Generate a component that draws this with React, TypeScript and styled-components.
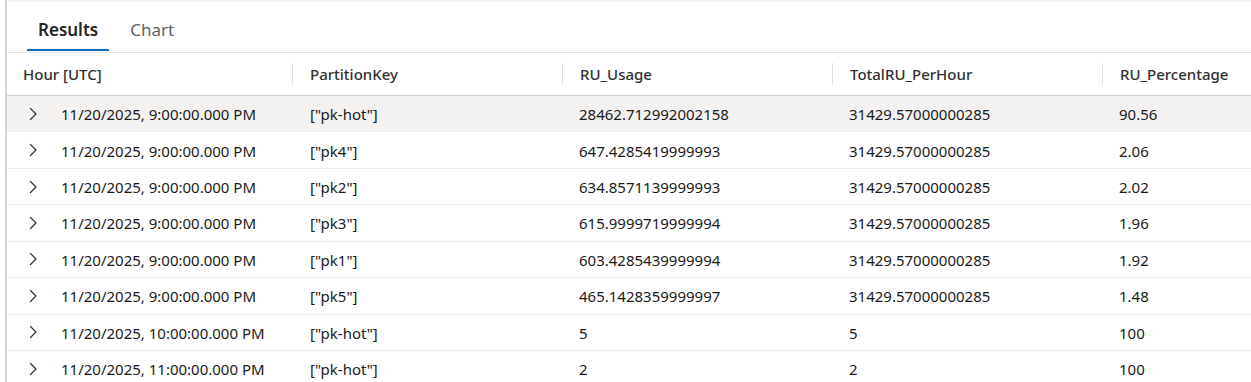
import React from "react";
import styled, { createGlobalStyle } from "styled-components";

const GlobalStyle = createGlobalStyle`
  html, body { margin: 0; padding: 0; background: #ffffff; }
  body { font-family: "Noto Sans", "Open Sans", sans-serif; color: #201f1e; overflow: hidden; }
  * { box-sizing: border-box; }
`;

const Page = styled.div`
  height: 382px;
  padding-left: 5px;
  display: flex;
  overflow: hidden;
`;

const Panel = styled.div`
  flex: 1;
  border-left: 2px solid #d4d4d4;
  display: flex;
  flex-direction: column;
  min-width: 0;
  & > * { flex-shrink: 0; }
`;

const TopStrip = styled.div`
  height: 2px;
  background: #f3f3f3;
`;

const TabBar = styled.div`
  display: flex;
  gap: 10px;
  padding-left: 20px;
  padding-bottom: 1px;
  height: 51px;
  border-bottom: 1px solid #e1e1e1;
`;

const Tab = styled.div<{ $active?: boolean }>`
  position: relative;
  display: flex;
  align-items: center;
  padding: 8px 11px 2px;
  height: 49px;
  font-size: 17px;
  font-weight: ${(p) => (p.$active ? 600 : 400)};
  color: ${(p) => (p.$active ? "#242424" : "#616161")};
  &::after {
    content: "";
    position: absolute;
    left: 0;
    right: 0;
    bottom: 0;
    height: 2px;
    background: ${(p) => (p.$active ? "#0f6cbd" : "transparent")};
  }
`;

const cols = "285px 270px 270px 270px 1fr";

const HeaderRow = styled.div`
  display: grid;
  grid-template-columns: ${cols};
  height: 43px;
  border-bottom: 1px solid #d1d1d1;
`;

const HeaderCell = styled.div<{ $first?: boolean }>`
  position: relative;
  display: flex;
  align-items: center;
  padding-left: ${(p) => (p.$first ? "16px" : "18px")};
  font-size: 15px;
  font-weight: 500;
  color: #323130;
  white-space: nowrap;
  &::before {
    content: "";
    display: ${(p) => (p.$first ? "none" : "block")};
    position: absolute;
    left: 0;
    top: 10px;
    bottom: 10px;
    width: 1px;
    background: #e0e0e0;
  }
`;

const DataRow = styled.div<{ $selected?: boolean }>`
  display: grid;
  grid-template-columns: ${cols};
  height: 36.43px;
  border-bottom: 1px solid #ededed;
  background: ${(p) => (p.$selected ? "#f3f2f1" : "#ffffff")};
`;

const Cell = styled.div<{ $pad?: number }>`
  display: flex;
  align-items: center;
  padding-left: ${(p) => p.$pad ?? 17}px;
  padding-top: 1px;
  font-size: 15px;
  color: #1b1a19;
  white-space: nowrap;
`;

const FirstCell = styled(Cell)`
  gap: 21px;
`;

const Chevron = styled.svg`
  width: 16px;
  height: 16px;
  flex-shrink: 0;
  margin-top: -1px;
`;

const rows = [
  ["11/20/2025, 9:00:00.000 PM", '["pk-hot"]', "28462.712992002158", "31429.57000000285", "90.56"],
  ["11/20/2025, 9:00:00.000 PM", '["pk4"]', "647.4285419999993", "31429.57000000285", "2.06"],
  ["11/20/2025, 9:00:00.000 PM", '["pk2"]', "634.8571139999993", "31429.57000000285", "2.02"],
  ["11/20/2025, 9:00:00.000 PM", '["pk3"]', "615.9999719999994", "31429.57000000285", "1.96"],
  ["11/20/2025, 9:00:00.000 PM", '["pk1"]', "603.4285439999994", "31429.57000000285", "1.92"],
  ["11/20/2025, 9:00:00.000 PM", '["pk5"]', "465.1428359999997", "31429.57000000285", "1.48"],
  ["11/20/2025, 10:00:00.000 PM", '["pk-hot"]', "5", "5", "100"],
  ["11/20/2025, 11:00:00.000 PM", '["pk-hot"]', "2", "2", "100"],
];

const headers = ["Hour [UTC]", "PartitionKey", "RU_Usage", "TotalRU_PerHour", "RU_Percentage"];

export default function App() {
  return (
    <>
      <GlobalStyle />
      <Page>
        <Panel>
          <TopStrip />
          <TabBar>
            <Tab $active>Results</Tab>
            <Tab>Chart</Tab>
          </TabBar>
          <HeaderRow>
            {headers.map((h, i) => (
              <HeaderCell key={h} $first={i === 0}>
                {h}
              </HeaderCell>
            ))}
          </HeaderRow>
          {rows.map((r, i) => (
            <DataRow key={i} $selected={i === 0}>
              <FirstCell>
                <Chevron viewBox="0 0 16 16" fill="none">
                  <path d="M6.5 2.5 L12 8 L6.5 13.5" stroke="#323130" strokeWidth="1.2" strokeLinecap="round" strokeLinejoin="round" />
                </Chevron>
                {r[0]}
              </FirstCell>
              {r.slice(1).map((c, j) => (
                <Cell key={j} $pad={j === 0 ? 18 : 17}>
                  {c}
                </Cell>
              ))}
            </DataRow>
          ))}
        </Panel>
      </Page>
    </>
  );
}
